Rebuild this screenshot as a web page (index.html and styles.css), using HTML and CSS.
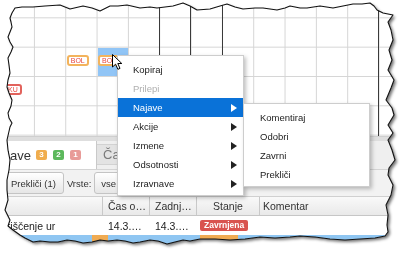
FILE: index.html
```html
<!DOCTYPE html>
<html lang="sl">
<head>
<meta charset="utf-8">
<title>Koledar</title>
<link rel="stylesheet" href="styles.css">
</head>
<body>
<div class="stage">
  <div class="paper">
    <div class="screen">
      <div class="cal">
        <div class="cell c4 r3"><span class="ev ev-bol">BOL</span></div>
        <div class="cell sel c5 r3"><span class="ev ev-bol">BOL</span></div>
        <div class="cell c2 r4"><span class="ev ev-ku">KU</span></div>
      </div>
      <div class="splitter"></div>
      <div class="tabs">
        <div class="tab active"><span class="tab-label">Najave</span><span class="cnt orange">3</span><span class="cnt green">2</span><span class="cnt pink">1</span></div>
        <div class="tab idle">Čakajoče</div>
      </div>
      <div class="toolbar">
        <button class="btn">Prekliči (1)</button>
        <span class="lbl">Vrste:</span>
        <button class="btn btn-drop">vse</button>
      </div>
      <div class="row thead">
        <div class="col c-name"></div>
        <div class="col c-time">Čas o…</div>
        <div class="col c-last">Zadnj…</div>
        <div class="col c-state center">Stanje</div>
        <div class="col c-comm">Komentar</div>
      </div>
      <div class="row tbody">
        <div class="col c-name"><span class="name-text">Koriščenje ur</span></div>
        <div class="col c-time">14.3.…</div>
        <div class="col c-last">14.3.…</div>
        <div class="col c-state"><span class="state">Zavrnjena</span></div>
        <div class="col c-comm"></div>
      </div>
      <div class="strip"></div>

      <div class="menu menu-main">
        <div class="item">Kopiraj</div>
        <div class="item disabled">Prilepi</div>
        <div class="item hot">Najave<span class="arrow"></span></div>
        <div class="item">Akcije<span class="arrow"></span></div>
        <div class="item">Izmene<span class="arrow"></span></div>
        <div class="item">Odsotnosti<span class="arrow"></span></div>
        <div class="item">Izravnave<span class="arrow"></span></div>
      </div>
      <div class="menu menu-sub">
        <div class="item">Komentiraj</div>
        <div class="item">Odobri</div>
        <div class="item">Zavrni</div>
        <div class="item">Prekliči</div>
      </div>
      <svg class="cursor" width="12" height="17" viewBox="0 0 12 17">
        <path d="M0.5 0.5 L0.5 13 L3.6 10.2 L5.9 15.3 L8 14.4 L5.8 9.5 L9.8 9.5 Z" fill="#fff" stroke="#000" stroke-width="1" stroke-linejoin="round"/>
      </svg>
    </div>
  </div>
  <svg class="edge" width="402" height="254" viewBox="0 0 402 254">
    <polygon fill="none" stroke="#111" stroke-width="1.1" stroke-linejoin="round" points="15,8 22,7 33,7 45,6 60,5 70,9 83,6 92,8 100,11 110,6 118,6 127,5 140,8 150,7 157,8 165,7 173,6 183,3 190,6 197,10 210,9 220,6 227,4 235,7 243,9 255,8 263,8 277,10 285,8 290,6 300,8 307,8 320,6 333,8 343,6 353,4 362,4 370,3 374,6 377,10 383,13 393,15 388,22 391,30 393,40 389,50 392,60 388,70 394,80 391,88 386,100 392,108 394,115 388,125 393,133 388,140 392,150 395,160 389,168 388,175 393,185 391,195 386,205 388,215 387,225 388,232 385,236 375,238 360,239 345,240 330,239 315,237 300,236 290,237 275,238 260,237 245,239 230,240 215,239 200,239 190,241 183,240 175,242 167,244 158,241 150,240 140,242 133,243 125,241 117,240 108,241 100,240 92,242 83,243 75,241 67,240 58,242 50,242 40,241 33,242 25,238 20,235 13,230 8,226 10,220 5,210 8,200 7,190 7,180 9,170 10,160 8,150 7,140 10,127 12,123 9,118 8,113 11,106 12,100 9,93 7,87 8,80 10,73 9,65 8,58 11,52 13,47 10,42 8,37 10,32 12,27 11,22 10,18 12,13"/>
  </svg>
</div>
</body>
</html>
```

FILE: styles.css
```css
* { box-sizing: border-box; }
html, body { margin: 0; padding: 0; background: #fff; }
body {
  width: 402px;
  height: 254px;
  overflow: hidden;
  font-family: "Liberation Sans", Arial, sans-serif;
  color: #222;
}
.stage { position: relative; width: 402px; height: 254px; }
.paper {
  width: 402px;
  height: 254px;
  filter: drop-shadow(2px 2px 1.5px rgba(0, 0, 0, 0.55));
}
.screen {
  position: relative;
  width: 402px;
  height: 254px;
  display: flex;
  flex-direction: column;
  background: #fff;
  clip-path: polygon(15px 8px, 22px 7px, 33px 7px, 45px 6px, 60px 5px, 70px 9px, 83px 6px, 92px 8px, 100px 11px, 110px 6px, 118px 6px, 127px 5px, 140px 8px, 150px 7px, 157px 8px, 165px 7px, 173px 6px, 183px 3px, 190px 6px, 197px 10px, 210px 9px, 220px 6px, 227px 4px, 235px 7px, 243px 9px, 255px 8px, 263px 8px, 277px 10px, 285px 8px, 290px 6px, 300px 8px, 307px 8px, 320px 6px, 333px 8px, 343px 6px, 353px 4px, 362px 4px, 370px 3px, 374px 6px, 377px 10px, 383px 13px, 393px 15px, 388px 22px, 391px 30px, 393px 40px, 389px 50px, 392px 60px, 388px 70px, 394px 80px, 391px 88px, 386px 100px, 392px 108px, 394px 115px, 388px 125px, 393px 133px, 388px 140px, 392px 150px, 395px 160px, 389px 168px, 388px 175px, 393px 185px, 391px 195px, 386px 205px, 388px 215px, 387px 225px, 388px 232px, 385px 236px, 375px 238px, 360px 239px, 345px 240px, 330px 239px, 315px 237px, 300px 236px, 290px 237px, 275px 238px, 260px 237px, 245px 239px, 230px 240px, 215px 239px, 200px 239px, 190px 241px, 183px 240px, 175px 242px, 167px 244px, 158px 241px, 150px 240px, 140px 242px, 133px 243px, 125px 241px, 117px 240px, 108px 241px, 100px 240px, 92px 242px, 83px 243px, 75px 241px, 67px 240px, 58px 242px, 50px 242px, 40px 241px, 33px 242px, 25px 238px, 20px 235px, 13px 230px, 8px 226px, 10px 220px, 5px 210px, 8px 200px, 7px 190px, 7px 180px, 9px 170px, 10px 160px, 8px 150px, 7px 140px, 10px 127px, 12px 123px, 9px 118px, 8px 113px, 11px 106px, 12px 100px, 9px 93px, 7px 87px, 8px 80px, 10px 73px, 9px 65px, 8px 58px, 11px 52px, 13px 47px, 10px 42px, 8px 37px, 10px 32px, 12px 27px, 11px 22px, 10px 18px, 12px 13px);
}

/* calendar grid */
.cal {
  flex: none;
  height: 136px;
  overflow: hidden;
  display: grid;
  grid-template-columns: 3.6px repeat(12, 31.333px);
  grid-template-rows: 18.33px repeat(4, 29.333px);
  background-color: #fff;
  background-image:
    linear-gradient(#3a3a3a, #3a3a3a),
    linear-gradient(#3a3a3a, #3a3a3a),
    linear-gradient(#3a3a3a, #3a3a3a),
    linear-gradient(#3a3a3a, #3a3a3a),
    linear-gradient(to right, #d5d5d5 1px, transparent 1px),
    linear-gradient(to bottom, #d5d5d5 1px, transparent 1px);
  background-size: 1px 100%, 1px 100%, 1px 100%, 1px 100%, 31.333px 100%, 100% 29.333px;
  background-position: 159px 0, 190px 0, 222px 0, 378px 0, 2.6px 0, 0 17.33px;
  background-repeat: no-repeat, no-repeat, no-repeat, no-repeat, repeat-x, repeat-y;
}
.cell { padding-top: 1.5px; }
.c2 { grid-column: 2; }
.c4 { grid-column: 4; }
.c5 { grid-column: 5; }
.r3 { grid-row: 3; }
.r4 { grid-row: 4; }
.sel { background: #91c5f6; margin: 0 1px 1px 0; }
.ev {
  display: inline-block;
  height: 11px;
  padding: 0 2px;
  font-size: 7px;
  line-height: 7px;
  color: #e8463d;
  background: #fff;
  border: 2px solid #f3b35c;
  border-radius: 3px;
  margin-left: 0.5px;
}
.ev-ku { border-color: #e2625c; margin-left: 0.5px; }

.splitter {
  flex: none;
  height: 5px;
  background: #dedede;
  border-top: 1px solid #cfcfcf;
}

/* tabs */
.tabs {
  flex: none;
  height: 28px;
  display: flex;
  background: #efefef;
}
.tab {
  display: flex;
  align-items: center;
  font-size: 13px;
}
.tab.active {
  width: 97px;
  background: #fff;
  border-right: 1px solid #c9c9c9;
  color: #333;
}
.tab-label { margin-left: -9.5px; }
.tab.idle {
  margin: 3px 0 4px;
  padding: 0 8px 0 6px;
  background: #e3e3e3;
  border: 1px solid #d2d2d2;
  border-left: none;
  color: #7a7a7a;
}
.cnt {
  display: inline-block;
  min-width: 11px;
  height: 10px;
  margin-left: 6px;
  border-radius: 2px;
  color: #fff;
  font-size: 8px;
  font-weight: bold;
  line-height: 10px;
  text-align: center;
}
.cnt.orange { background: #f0ad4e; margin-left: 5px; }
.cnt.green { background: #5cb85c; }
.cnt.pink { background: #e89b98; }

/* toolbar */
.toolbar {
  flex: none;
  height: 27px;
  display: flex;
  align-items: center;
  gap: 3px;
  padding-left: 3px;
  background: #f2f2f2;
  border-top: 1px solid #d4d4d4;
}
.btn {
  height: 22px;
  padding: 0 7px;
  font-family: inherit;
  font-size: 9.5px;
  color: #333;
  background: linear-gradient(#ffffff, #e6e6e6);
  border: 1px solid #c4c4c4;
  border-radius: 3px;
}
.btn-drop { width: 60px; text-align: left; padding-left: 6px; }
.lbl { font-size: 9.5px; color: #333; }

/* table */
.row { flex: none; display: flex; font-size: 10.5px; }
.thead {
  height: 20px;
  background: linear-gradient(#f9f9f9, #e9e9e9);
  border-top: 1px solid #d0d0d0;
  border-bottom: 1px solid #c6c6c6;
  color: #333;
}
.thead .col { border-right: 1px solid #c9c9c9; }
.tbody { height: 19px; background: #fff; color: #222; }
.col {
  display: flex;
  align-items: center;
  white-space: nowrap;
  overflow: hidden;
}
.c-name { width: 103px; }
.c-time, .c-last { width: 47px; padding-left: 5px; }
.c-state { width: 63px; padding-left: 3px; }
.c-state.center { justify-content: center; padding-left: 0; }
.c-comm { flex: 1; padding-left: 3px; }
.thead .c-comm { border-right: none; }
.name-text { margin-left: -6px; }
.state {
  display: inline-block;
  height: 11px;
  padding: 0 4px;
  background: #d9534f;
  color: #fff;
  font-size: 8.5px;
  font-weight: bold;
  line-height: 11px;
  border-radius: 2px;
}
.strip {
  flex: 1;
  background: linear-gradient(to right, #8fc6f2 92px, #f0ab52 92px 108px, #8fc6f2 108px 200px, #f0ab52 200px 238px, #8fc6f2 238px);
}

/* context menus */
.menu {
  position: absolute;
  width: 127px;
  background: #fff;
  border: 1px solid #cdcdcd;
  box-shadow: 2px 2px 4px rgba(0, 0, 0, 0.25);
  font-size: 9.5px;
  color: #222;
}
.menu-main { left: 117px; top: 55px; padding: 4px 0 2px; }
.menu-sub { left: 243px; top: 103px; padding: 4px 0 2px; }
.item {
  height: 19px;
  display: flex;
  align-items: center;
  padding: 0 6px 0 15px;
}
.menu-sub .item { padding-left: 16px; }
.item.disabled { color: #b0b0b0; }
.item.hot { background: #0a72d8; color: #fff; }
.arrow {
  margin-left: auto;
  width: 0;
  height: 0;
  border-left: 6px solid #222;
  border-top: 4px solid transparent;
  border-bottom: 4px solid transparent;
}
.item.hot .arrow { border-left-color: #fff; }
.cursor { position: absolute; left: 112px; top: 54px; }

.edge { position: absolute; left: 0; top: 0; pointer-events: none; }
```
